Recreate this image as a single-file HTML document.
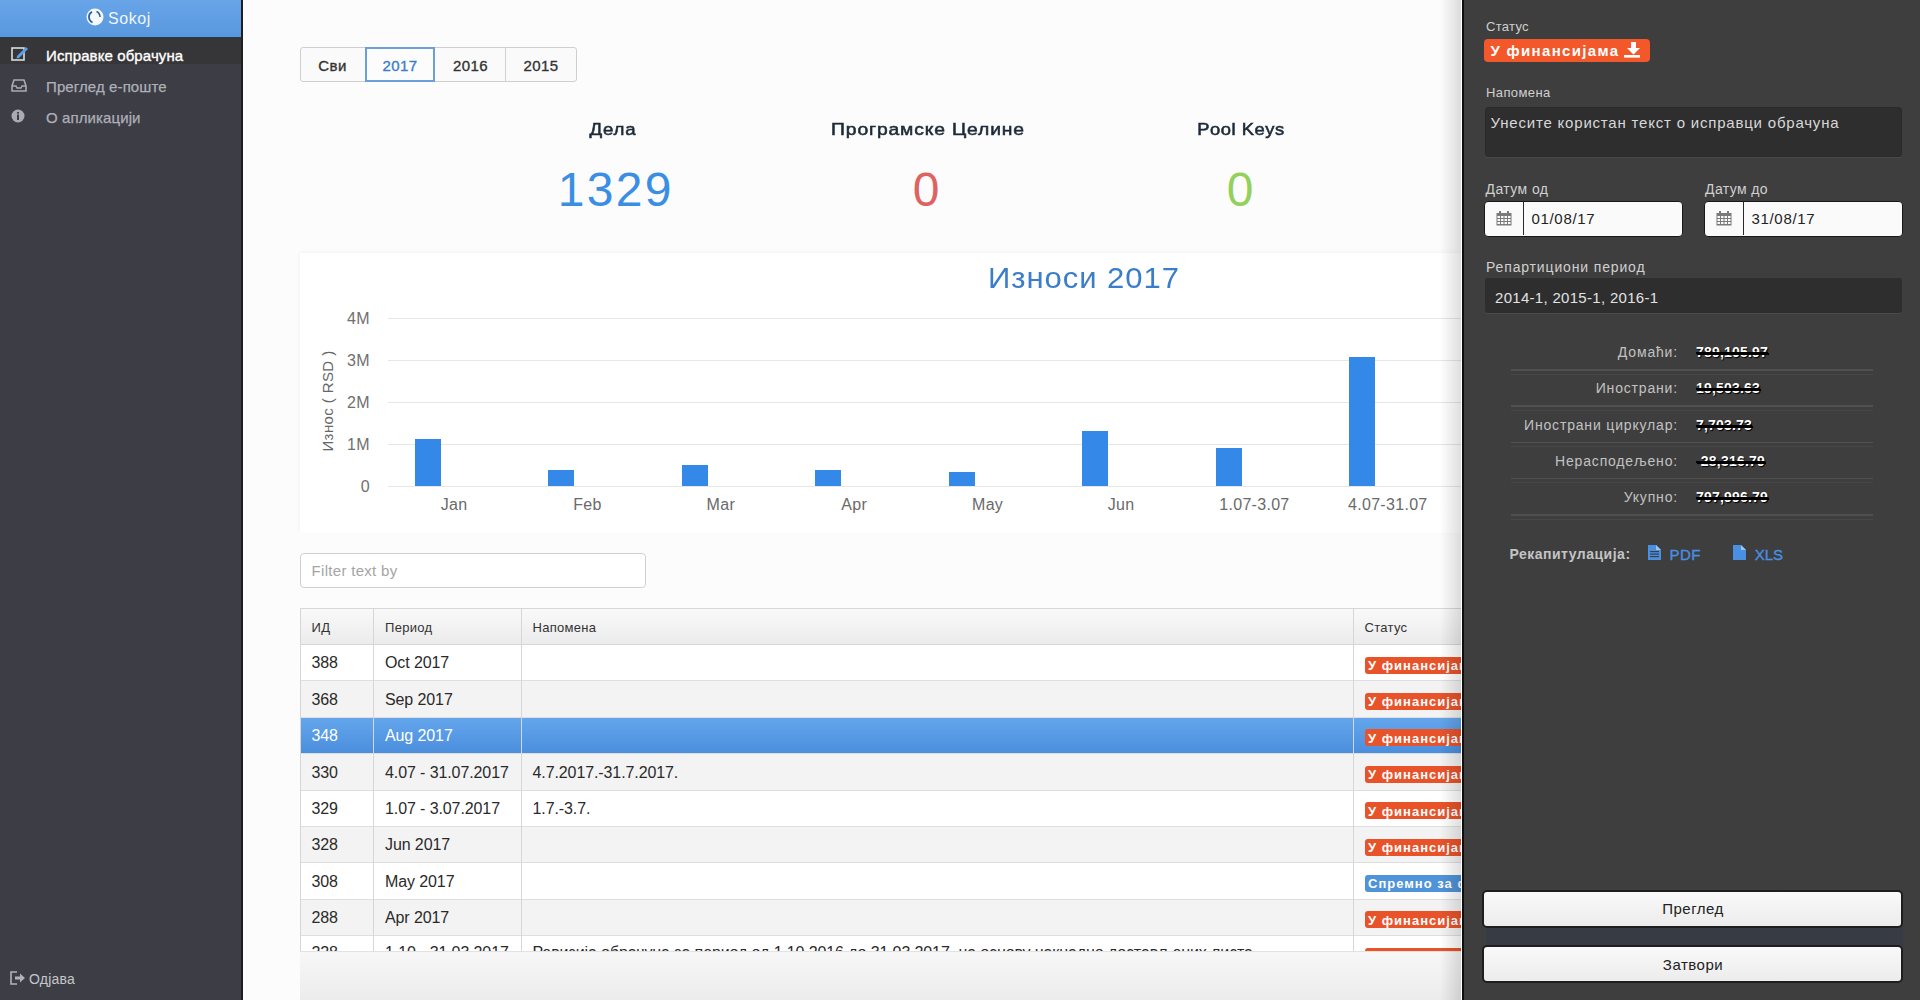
<!DOCTYPE html>
<html><head><meta charset="utf-8">
<style>
*{margin:0;padding:0}
html,body{width:1920px;height:1000px;overflow:hidden;background:#fcfcfc;position:relative;font-family:"Liberation Sans", sans-serif}
.r{position:absolute}
.t{position:absolute;white-space:nowrap;line-height:1}
</style></head><body>
<div class="r" style="left:243.0px;top:0.0px;width:1219.0px;height:1000.0px;background:#fcfcfc"></div>
<div class="r" style="left:300.0px;top:952.0px;width:1162.0px;height:48.0px;background:linear-gradient(#f7f7f7,#ececec)"></div>
<div class="r" style="left:0.0px;top:0.0px;width:241.0px;height:1000.0px;background:#3d3d45"></div>
<div class="r" style="left:241.0px;top:0.0px;width:2.0px;height:1000.0px;background:#1f1f22"></div>
<div class="r" style="left:0.0px;top:0.0px;width:241.0px;height:37.0px;background:linear-gradient(#67a4e8,#5a98de)"></div>
<div class="r" style="left:0.0px;top:34.0px;width:241.0px;height:3.0px;background:#5499e4"></div>
<div class="r" style="left:0.0px;top:37.0px;width:241.0px;height:27.0px;background:#363638"></div>
<svg class="r" style="left:86px;top:8px" width="18" height="18" viewBox="0 0 18 18"><circle cx="9" cy="9" r="8.5" fill="#f4f9ff"/><path d="M6 3.8 A6 6 0 0 0 6.5 14.5" fill="none" stroke="#2f5f99" stroke-width="1.7"/><path d="M10.5 3.5 A6 6 0 0 1 14 9" fill="none" stroke="#2f5f99" stroke-width="1.5"/></svg>
<div class="t" style="left:108.0px;top:10.7px;font-size:16px;color:#eef6ff;font-weight:normal;letter-spacing:0.6px;">Sokoj</div>
<svg class="r" style="left:11px;top:46px" width="18" height="16" viewBox="0 0 18 16"><rect x="1" y="2" width="12" height="12" fill="none" stroke="#ddd" stroke-width="1.6"/><path d="M6 10 L15 1 L17 3 L8 12 L5.5 12.5 Z" fill="#5a9ee8"/></svg>
<div class="t" style="left:46.0px;top:47.5px;font-size:15px;color:#ffffff;font-weight:normal;letter-spacing:0.1px;-webkit-text-stroke:0.35px currentColor;">Исправке обрачуна</div>
<svg class="r" style="left:11px;top:79px" width="16" height="13" viewBox="0 0 16 13"><path d="M3 1 H13 L15 7 V12 H1 V7 Z" fill="none" stroke="#a9abb3" stroke-width="1.6"/><path d="M1 7 H5 L6 9 H10 L11 7 H15" fill="none" stroke="#a9abb3" stroke-width="1.4"/></svg>
<div class="t" style="left:46.0px;top:78.5px;font-size:15px;color:#aeb0b8;font-weight:normal;letter-spacing:0.1px;-webkit-text-stroke:0.25px currentColor;">Преглед е-поште</div>
<svg class="r" style="left:11px;top:109px" width="14" height="14" viewBox="0 0 14 14"><circle cx="7" cy="7" r="6.5" fill="#a9abb3"/><rect x="6" y="5.5" width="2" height="5.5" fill="#3d3d45"/><rect x="6" y="3" width="2" height="1.6" fill="#3d3d45"/></svg>
<div class="t" style="left:46.0px;top:109.5px;font-size:15px;color:#aeb0b8;font-weight:normal;letter-spacing:0.1px;-webkit-text-stroke:0.25px currentColor;">О апликацији</div>
<svg class="r" style="left:10px;top:971px" width="16" height="14" viewBox="0 0 16 14"><path d="M7 1 H1 V13 H7" fill="none" stroke="#b0b2ba" stroke-width="1.6"/><path d="M5 5.5 H10 V2.5 L15 7 L10 11.5 V8.5 H5 Z" fill="#b0b2ba"/></svg>
<div class="t" style="left:29.0px;top:972.4px;font-size:14px;color:#c4c6cc;font-weight:normal;letter-spacing:0.2px;">Одјава</div>
<div class="r" style="left:300.0px;top:47.0px;width:277.0px;height:35.0px;background:#fafafa;border:1px solid #cfcfcf;border-radius:3px;box-sizing:border-box"></div>
<div class="r" style="left:505.0px;top:48.0px;width:1.0px;height:33.0px;background:#d2d2d2"></div>
<div class="r" style="left:365.0px;top:47.0px;width:70.0px;height:35.0px;border:2px solid #6a9fd8;box-sizing:border-box;background:#fcfcfc"></div>
<div class="t" style="left:302.5px;width:60px;text-align:center;top:57.9px;font-size:15px;color:#333;font-weight:normal;letter-spacing:0.4px;-webkit-text-stroke:0.35px currentColor;">Сви</div>
<div class="t" style="left:370.0px;width:60px;text-align:center;top:57.9px;font-size:15px;color:#3b7dc9;font-weight:normal;letter-spacing:0.4px;-webkit-text-stroke:0.35px currentColor;">2017</div>
<div class="t" style="left:440.5px;width:60px;text-align:center;top:57.9px;font-size:15px;color:#333;font-weight:normal;letter-spacing:0.4px;-webkit-text-stroke:0.35px currentColor;">2016</div>
<div class="t" style="left:511.0px;width:60px;text-align:center;top:57.9px;font-size:15px;color:#333;font-weight:normal;letter-spacing:0.4px;-webkit-text-stroke:0.35px currentColor;">2015</div>
<div class="t" style="left:463.0px;width:300px;text-align:center;top:121.2px;font-size:17px;color:#1d2a38;font-weight:normal;letter-spacing:0.7px;-webkit-text-stroke:0.55px currentColor;transform:scaleX(1.1)">Дела</div>
<div class="t" style="left:777.5px;width:300px;text-align:center;top:121.2px;font-size:17px;color:#1d2a38;font-weight:normal;letter-spacing:0.75px;-webkit-text-stroke:0.55px currentColor;transform:scaleX(1.135)">Програмске Целине</div>
<div class="t" style="left:1091.0px;width:300px;text-align:center;top:121.2px;font-size:17px;color:#1d2a38;font-weight:normal;letter-spacing:0.5px;-webkit-text-stroke:0.55px currentColor;transform:scaleX(1.08)">Pool Keys</div>
<div class="t" style="left:465.8px;width:300px;text-align:center;top:166.4px;font-size:48px;color:#3a8ee3;font-weight:normal;letter-spacing:2.3px;">1329</div>
<div class="t" style="left:776.0px;width:300px;text-align:center;top:166.4px;font-size:48px;color:#df6262;font-weight:normal;letter-spacing:0px;">0</div>
<div class="t" style="left:1090.0px;width:300px;text-align:center;top:166.4px;font-size:48px;color:#94d15a;font-weight:normal;letter-spacing:0px;">0</div>
<div class="r" style="left:300.0px;top:253.0px;width:1170.0px;height:280.0px;background:#fff;box-shadow:0 -2px 3px rgba(0,0,0,0.025), -2px 0 3px rgba(0,0,0,0.02)"></div>
<div class="t" style="left:883.5px;width:400px;text-align:center;top:262.8px;font-size:30px;color:#3a7dc8;font-weight:normal;letter-spacing:0.9px;transform:scaleX(1.035)">Износи 2017</div>
<div class="r" style="left:388.0px;top:317.5px;width:1080.0px;height:1.5px;background:#e6e6e6"></div>
<div class="t" style="left:310.0px;width:60px;text-align:right;top:310.7px;font-size:16px;color:#707070;font-weight:normal;letter-spacing:0.4px;">4M</div>
<div class="r" style="left:388.0px;top:359.5px;width:1080.0px;height:1.5px;background:#e6e6e6"></div>
<div class="t" style="left:310.0px;width:60px;text-align:right;top:352.7px;font-size:16px;color:#707070;font-weight:normal;letter-spacing:0.4px;">3M</div>
<div class="r" style="left:388.0px;top:401.5px;width:1080.0px;height:1.5px;background:#e6e6e6"></div>
<div class="t" style="left:310.0px;width:60px;text-align:right;top:394.7px;font-size:16px;color:#707070;font-weight:normal;letter-spacing:0.4px;">2M</div>
<div class="r" style="left:388.0px;top:443.5px;width:1080.0px;height:1.5px;background:#e6e6e6"></div>
<div class="t" style="left:310.0px;width:60px;text-align:right;top:436.7px;font-size:16px;color:#707070;font-weight:normal;letter-spacing:0.4px;">1M</div>
<div class="r" style="left:388.0px;top:485.5px;width:1080.0px;height:1.5px;background:#e6e6e6"></div>
<div class="t" style="left:310.0px;width:60px;text-align:right;top:478.7px;font-size:16px;color:#707070;font-weight:normal;letter-spacing:0.4px;">0</div>
<div class="t" style="left:268px;top:392px;width:120px;text-align:center;font-size:15px;color:#666;transform:rotate(-90deg);letter-spacing:0.4px;line-height:18px">Износ ( RSD )</div>
<div class="r" style="left:415.0px;top:439.0px;width:26.0px;height:47.0px;background:#3388e8"></div>
<div class="r" style="left:548.0px;top:470.0px;width:26.0px;height:16.0px;background:#3388e8"></div>
<div class="r" style="left:682.0px;top:465.0px;width:26.0px;height:21.0px;background:#3388e8"></div>
<div class="r" style="left:815.0px;top:470.0px;width:26.0px;height:16.0px;background:#3388e8"></div>
<div class="r" style="left:949.0px;top:472.0px;width:26.0px;height:14.0px;background:#3388e8"></div>
<div class="r" style="left:1082.0px;top:431.0px;width:26.0px;height:55.0px;background:#3388e8"></div>
<div class="r" style="left:1216.0px;top:448.0px;width:26.0px;height:38.0px;background:#3388e8"></div>
<div class="r" style="left:1349.0px;top:357.0px;width:26.0px;height:129.0px;background:#3388e8"></div>
<div class="t" style="left:384.0px;width:140px;text-align:center;top:497.3px;font-size:16px;color:#6a6a6a;font-weight:normal;letter-spacing:0.3px;">Jan</div>
<div class="t" style="left:517.4px;width:140px;text-align:center;top:497.3px;font-size:16px;color:#6a6a6a;font-weight:normal;letter-spacing:0.3px;">Feb</div>
<div class="t" style="left:650.8px;width:140px;text-align:center;top:497.3px;font-size:16px;color:#6a6a6a;font-weight:normal;letter-spacing:0.3px;">Mar</div>
<div class="t" style="left:784.2px;width:140px;text-align:center;top:497.3px;font-size:16px;color:#6a6a6a;font-weight:normal;letter-spacing:0.3px;">Apr</div>
<div class="t" style="left:917.6px;width:140px;text-align:center;top:497.3px;font-size:16px;color:#6a6a6a;font-weight:normal;letter-spacing:0.3px;">May</div>
<div class="t" style="left:1051.0px;width:140px;text-align:center;top:497.3px;font-size:16px;color:#6a6a6a;font-weight:normal;letter-spacing:0.3px;">Jun</div>
<div class="t" style="left:1184.4px;width:140px;text-align:center;top:497.3px;font-size:16px;color:#6a6a6a;font-weight:normal;letter-spacing:0.3px;">1.07-3.07</div>
<div class="t" style="left:1317.8px;width:140px;text-align:center;top:497.3px;font-size:16px;color:#6a6a6a;font-weight:normal;letter-spacing:0.3px;">4.07-31.07</div>
<div class="r" style="left:300.0px;top:553.0px;width:346.0px;height:35.0px;background:#fff;border:1px solid #d0d0d0;border-radius:4px;box-sizing:border-box"></div>
<div class="t" style="left:311.6px;top:563.0px;font-size:15px;color:#a5a5a5;font-weight:normal;letter-spacing:0.3px;">Filter text by</div>
<div class="r" style="left:0;top:0;width:1462px;height:952px;overflow:hidden">
<div class="r" style="left:300.0px;top:608.0px;width:1170.0px;height:37.0px;background:linear-gradient(#f9f9f9,#ebebeb);border-top:1px solid #d6d6d6;box-sizing:border-box"></div>
<div class="r" style="left:300.0px;top:644.0px;width:1170.0px;height:1.0px;background:#d6d6d6"></div>
<div class="r" style="left:300.0px;top:645.0px;width:1170.0px;height:36.4px;background:#ffffff"></div>
<div class="r" style="left:300.0px;top:680.4px;width:1170.0px;height:1.0px;background:#dedede"></div>
<div class="t" style="left:311.5px;top:655.3px;font-size:16px;color:#2a2a2a;font-weight:normal;letter-spacing:-0.1px;">388</div>
<div class="t" style="left:385.0px;top:655.3px;font-size:16px;color:#2a2a2a;font-weight:normal;letter-spacing:-0.1px;">Oct 2017</div>
<div class="r" style="left:1364.5px;top:656.5px;width:110.0px;height:17.0px;background:#e8532a;border-radius:3px"></div>
<div class="t" style="left:1368.0px;top:659.0px;font-size:13px;color:#fff;font-weight:bold;letter-spacing:1.0px;">У финансијама</div>
<div class="r" style="left:300.0px;top:681.4px;width:1170.0px;height:36.4px;background:#f3f3f3"></div>
<div class="r" style="left:300.0px;top:716.8px;width:1170.0px;height:1.0px;background:#dedede"></div>
<div class="t" style="left:311.5px;top:691.7px;font-size:16px;color:#2a2a2a;font-weight:normal;letter-spacing:-0.1px;">368</div>
<div class="t" style="left:385.0px;top:691.7px;font-size:16px;color:#2a2a2a;font-weight:normal;letter-spacing:-0.1px;">Sep 2017</div>
<div class="r" style="left:1364.5px;top:692.9px;width:110.0px;height:17.0px;background:#e8532a;border-radius:3px"></div>
<div class="t" style="left:1368.0px;top:695.4px;font-size:13px;color:#fff;font-weight:bold;letter-spacing:1.0px;">У финансијама</div>
<div class="r" style="left:300.0px;top:717.8px;width:1170.0px;height:36.4px;background:linear-gradient(#64a6ec,#4a8ddc)"></div>
<div class="r" style="left:300.0px;top:753.2px;width:1170.0px;height:1.0px;background:#dedede"></div>
<div class="t" style="left:311.5px;top:728.1px;font-size:16px;color:#fff;font-weight:normal;letter-spacing:-0.1px;">348</div>
<div class="t" style="left:385.0px;top:728.1px;font-size:16px;color:#fff;font-weight:normal;letter-spacing:-0.1px;">Aug 2017</div>
<div class="r" style="left:1364.5px;top:729.3px;width:110.0px;height:17.0px;background:#e8532a;border-radius:3px"></div>
<div class="t" style="left:1368.0px;top:731.8px;font-size:13px;color:#fff;font-weight:bold;letter-spacing:1.0px;">У финансијама</div>
<div class="r" style="left:300.0px;top:754.2px;width:1170.0px;height:36.4px;background:#f3f3f3"></div>
<div class="r" style="left:300.0px;top:789.6px;width:1170.0px;height:1.0px;background:#dedede"></div>
<div class="t" style="left:311.5px;top:764.5px;font-size:16px;color:#2a2a2a;font-weight:normal;letter-spacing:-0.1px;">330</div>
<div class="t" style="left:385.0px;top:764.5px;font-size:16px;color:#2a2a2a;font-weight:normal;letter-spacing:-0.1px;">4.07 - 31.07.2017</div>
<div class="t" style="left:532.5px;top:764.5px;font-size:16px;color:#2a2a2a;font-weight:normal;letter-spacing:-0.1px;">4.7.2017.-31.7.2017.</div>
<div class="r" style="left:1364.5px;top:765.7px;width:110.0px;height:17.0px;background:#e8532a;border-radius:3px"></div>
<div class="t" style="left:1368.0px;top:768.2px;font-size:13px;color:#fff;font-weight:bold;letter-spacing:1.0px;">У финансијама</div>
<div class="r" style="left:300.0px;top:790.6px;width:1170.0px;height:36.4px;background:#ffffff"></div>
<div class="r" style="left:300.0px;top:826.0px;width:1170.0px;height:1.0px;background:#dedede"></div>
<div class="t" style="left:311.5px;top:800.9px;font-size:16px;color:#2a2a2a;font-weight:normal;letter-spacing:-0.1px;">329</div>
<div class="t" style="left:385.0px;top:800.9px;font-size:16px;color:#2a2a2a;font-weight:normal;letter-spacing:-0.1px;">1.07 - 3.07.2017</div>
<div class="t" style="left:532.5px;top:800.9px;font-size:16px;color:#2a2a2a;font-weight:normal;letter-spacing:-0.1px;">1.7.-3.7.</div>
<div class="r" style="left:1364.5px;top:802.1px;width:110.0px;height:17.0px;background:#e8532a;border-radius:3px"></div>
<div class="t" style="left:1368.0px;top:804.6px;font-size:13px;color:#fff;font-weight:bold;letter-spacing:1.0px;">У финансијама</div>
<div class="r" style="left:300.0px;top:827.0px;width:1170.0px;height:36.4px;background:#f3f3f3"></div>
<div class="r" style="left:300.0px;top:862.4px;width:1170.0px;height:1.0px;background:#dedede"></div>
<div class="t" style="left:311.5px;top:837.3px;font-size:16px;color:#2a2a2a;font-weight:normal;letter-spacing:-0.1px;">328</div>
<div class="t" style="left:385.0px;top:837.3px;font-size:16px;color:#2a2a2a;font-weight:normal;letter-spacing:-0.1px;">Jun 2017</div>
<div class="r" style="left:1364.5px;top:838.5px;width:110.0px;height:17.0px;background:#e8532a;border-radius:3px"></div>
<div class="t" style="left:1368.0px;top:841.0px;font-size:13px;color:#fff;font-weight:bold;letter-spacing:1.0px;">У финансијама</div>
<div class="r" style="left:300.0px;top:863.4px;width:1170.0px;height:36.4px;background:#ffffff"></div>
<div class="r" style="left:300.0px;top:898.8px;width:1170.0px;height:1.0px;background:#dedede"></div>
<div class="t" style="left:311.5px;top:873.7px;font-size:16px;color:#2a2a2a;font-weight:normal;letter-spacing:-0.1px;">308</div>
<div class="t" style="left:385.0px;top:873.7px;font-size:16px;color:#2a2a2a;font-weight:normal;letter-spacing:-0.1px;">May 2017</div>
<div class="r" style="left:1364.5px;top:874.9px;width:110.0px;height:17.0px;background:#4f93d8;border-radius:3px"></div>
<div class="t" style="left:1368.0px;top:877.4px;font-size:13px;color:#fff;font-weight:bold;letter-spacing:1.0px;">Спремно за финансије</div>
<div class="r" style="left:300.0px;top:899.8px;width:1170.0px;height:36.4px;background:#f3f3f3"></div>
<div class="r" style="left:300.0px;top:935.2px;width:1170.0px;height:1.0px;background:#dedede"></div>
<div class="t" style="left:311.5px;top:910.1px;font-size:16px;color:#2a2a2a;font-weight:normal;letter-spacing:-0.1px;">288</div>
<div class="t" style="left:385.0px;top:910.1px;font-size:16px;color:#2a2a2a;font-weight:normal;letter-spacing:-0.1px;">Apr 2017</div>
<div class="r" style="left:1364.5px;top:911.3px;width:110.0px;height:17.0px;background:#e8532a;border-radius:3px"></div>
<div class="t" style="left:1368.0px;top:913.8px;font-size:13px;color:#fff;font-weight:bold;letter-spacing:1.0px;">У финансијама</div>
<div class="r" style="left:300.0px;top:936.2px;width:1170.0px;height:15.8px;background:#ffffff"></div>
<div class="t" style="left:311.5px;top:945.3px;font-size:16px;color:#2a2a2a;font-weight:normal;letter-spacing:-0.1px;">228</div>
<div class="t" style="left:385.0px;top:945.3px;font-size:16px;color:#2a2a2a;font-weight:normal;letter-spacing:-0.1px;">1.10 - 31.03.2017</div>
<div class="t" style="left:532.5px;top:945.3px;font-size:16px;color:#2a2a2a;font-weight:normal;letter-spacing:-0.1px;">Ревизија обрачуна за период од 1.10.2016 до 31.03.2017, на основу накнадно достављених листа</div>
<div class="r" style="left:1364.5px;top:947.7px;width:110.0px;height:17.0px;background:#e8532a;border-radius:3px"></div>
<div class="t" style="left:311.5px;top:620.7px;font-size:13px;color:#333;font-weight:normal;letter-spacing:0.3px;">ИД</div>
<div class="t" style="left:385.0px;top:620.7px;font-size:13px;color:#333;font-weight:normal;letter-spacing:0.3px;">Период</div>
<div class="t" style="left:532.5px;top:620.7px;font-size:13px;color:#333;font-weight:normal;letter-spacing:0.3px;">Напомена</div>
<div class="t" style="left:1364.5px;top:620.7px;font-size:13px;color:#333;font-weight:normal;letter-spacing:0.3px;">Статус</div>
<div class="r" style="left:300.0px;top:608.0px;width:1.0px;height:344.0px;background:#d6d6d6"></div>
<div class="r" style="left:373.0px;top:608.0px;width:1.0px;height:344.0px;background:#d6d6d6"></div>
<div class="r" style="left:521.0px;top:608.0px;width:1.0px;height:344.0px;background:#d6d6d6"></div>
<div class="r" style="left:1353.0px;top:608.0px;width:1.0px;height:344.0px;background:#d6d6d6"></div>
</div>
<div class="r" style="left:300.0px;top:951.0px;width:1162.0px;height:1.0px;background:#e2e2e2"></div>
<div class="r" style="left:1440.0px;top:0.0px;width:21.0px;height:1000.0px;background:linear-gradient(90deg,rgba(0,0,0,0),rgba(0,0,0,0.13))"></div>
<div class="r" style="left:1461.0px;top:0.0px;width:1.0px;height:1000.0px;background:#fff"></div>
<div class="r" style="left:1462.0px;top:0.0px;width:458.0px;height:1000.0px;background:#3e3e3e"></div>
<div class="r" style="left:1462.0px;top:0.0px;width:2.0px;height:1000.0px;background:#0e0e0e"></div>
<div class="t" style="left:1486.0px;top:20.2px;font-size:13px;color:#d0d0d0;font-weight:normal;letter-spacing:0.3px;">Статус</div>
<div class="r" style="left:1484.0px;top:39.0px;width:166.0px;height:23.4px;background:#f2582a;border-radius:4px"></div>
<div class="t" style="left:1490.4px;top:43.1px;font-size:15px;color:#fff;font-weight:bold;letter-spacing:1.34px;">У финансијама</div>
<svg class="r" style="left:1624px;top:42px" width="19" height="17" viewBox="0 0 19 17"><path d="M7 0 H12 V6 H16 L9.5 12.5 L3 6 H7 Z" fill="#fff"/><rect x="0" y="13" width="16" height="2.6" fill="#fff"/></svg>
<div class="t" style="left:1486.0px;top:86.0px;font-size:13px;color:#d0d0d0;font-weight:normal;letter-spacing:0.4px;">Напомена</div>
<div class="r" style="left:1485.0px;top:106.5px;width:417.0px;height:50.5px;background:#2e2e2e;border:1px solid #2a2a2a;border-radius:3px;box-sizing:border-box;box-shadow:0 1px 0 #4a4a4a"></div>
<div class="t" style="left:1490.6px;top:115.3px;font-size:15px;color:#d8d8d8;font-weight:normal;letter-spacing:0.8px;">Унесите користан текст о исправци обрачуна</div>
<div class="t" style="left:1485.6px;top:182.0px;font-size:14px;color:#d0d0d0;font-weight:normal;letter-spacing:0.4px;">Датум од</div>
<div class="t" style="left:1705.0px;top:182.0px;font-size:14px;color:#d0d0d0;font-weight:normal;letter-spacing:0.4px;">Датум до</div>
<div class="r" style="left:1484.0px;top:201.3px;width:199.0px;height:35.5px;background:#fafafa;border:1px solid #181818;border-radius:4px;box-sizing:border-box"></div>
<div class="r" style="left:1523.0px;top:202.3px;width:1.0px;height:33.0px;background:#2a2a2a"></div>
<svg class="r" style="left:1496px;top:211px" width="16" height="15" viewBox="0 0 16 15"><rect x="0.5" y="2" width="15" height="12.5" fill="#7a7a7a"/><rect x="3" y="0" width="2" height="3" fill="#7a7a7a"/><rect x="11" y="0" width="2" height="3" fill="#7a7a7a"/><rect x="1.5" y="5" width="2.5" height="2" fill="#fafafa"/><rect x="1.5" y="8" width="2.5" height="2" fill="#fafafa"/><rect x="1.5" y="11" width="2.5" height="2" fill="#fafafa"/><rect x="5.0" y="5" width="2.5" height="2" fill="#fafafa"/><rect x="5.0" y="8" width="2.5" height="2" fill="#fafafa"/><rect x="5.0" y="11" width="2.5" height="2" fill="#fafafa"/><rect x="8.5" y="5" width="2.5" height="2" fill="#fafafa"/><rect x="8.5" y="8" width="2.5" height="2" fill="#fafafa"/><rect x="8.5" y="11" width="2.5" height="2" fill="#fafafa"/><rect x="12.0" y="5" width="2.5" height="2" fill="#fafafa"/><rect x="12.0" y="8" width="2.5" height="2" fill="#fafafa"/><rect x="12.0" y="11" width="2.5" height="2" fill="#fafafa"/></svg>
<div class="t" style="left:1531.4px;top:211.4px;font-size:15px;color:#222;font-weight:normal;letter-spacing:0.7px;">01/08/17</div>
<div class="r" style="left:1704.0px;top:201.3px;width:199.0px;height:35.5px;background:#fafafa;border:1px solid #181818;border-radius:4px;box-sizing:border-box"></div>
<div class="r" style="left:1743.0px;top:202.3px;width:1.0px;height:33.0px;background:#2a2a2a"></div>
<svg class="r" style="left:1716px;top:211px" width="16" height="15" viewBox="0 0 16 15"><rect x="0.5" y="2" width="15" height="12.5" fill="#7a7a7a"/><rect x="3" y="0" width="2" height="3" fill="#7a7a7a"/><rect x="11" y="0" width="2" height="3" fill="#7a7a7a"/><rect x="1.5" y="5" width="2.5" height="2" fill="#fafafa"/><rect x="1.5" y="8" width="2.5" height="2" fill="#fafafa"/><rect x="1.5" y="11" width="2.5" height="2" fill="#fafafa"/><rect x="5.0" y="5" width="2.5" height="2" fill="#fafafa"/><rect x="5.0" y="8" width="2.5" height="2" fill="#fafafa"/><rect x="5.0" y="11" width="2.5" height="2" fill="#fafafa"/><rect x="8.5" y="5" width="2.5" height="2" fill="#fafafa"/><rect x="8.5" y="8" width="2.5" height="2" fill="#fafafa"/><rect x="8.5" y="11" width="2.5" height="2" fill="#fafafa"/><rect x="12.0" y="5" width="2.5" height="2" fill="#fafafa"/><rect x="12.0" y="8" width="2.5" height="2" fill="#fafafa"/><rect x="12.0" y="11" width="2.5" height="2" fill="#fafafa"/></svg>
<div class="t" style="left:1751.4px;top:211.4px;font-size:15px;color:#222;font-weight:normal;letter-spacing:0.7px;">31/08/17</div>
<div class="t" style="left:1486.0px;top:260.2px;font-size:14px;color:#d0d0d0;font-weight:normal;letter-spacing:0.85px;">Репартициони период</div>
<div class="r" style="left:1485.0px;top:277.5px;width:417.0px;height:35.0px;background:#2e2e2e;border-radius:3px;box-shadow:0 1px 0 #4a4a4a"></div>
<div class="t" style="left:1495.0px;top:289.8px;font-size:15px;color:#e2e2e2;font-weight:normal;letter-spacing:0.3px;">2014-1, 2015-1, 2016-1</div>
<div class="t" style="left:1478.0px;width:200px;text-align:right;top:344.9px;font-size:14px;color:#c2c2c2;font-weight:normal;letter-spacing:0.83px;">Домаћи:</div>
<div class="t" style="left:1696.0px;top:344.9px;font-size:14px;color:#fff;font-weight:bold;letter-spacing:0.2px;text-decoration:line-through;text-decoration-color:#000;text-decoration-thickness:1.5px;text-shadow:1px 1px 1px #000">789,105.97</div>
<div class="r" style="left:1511.0px;top:369.0px;width:362.0px;height:1.5px;background:#505050"></div>
<div class="r" style="left:1511.0px;top:373.5px;width:362.0px;height:1.0px;background:#474747"></div>
<div class="t" style="left:1478.0px;width:200px;text-align:right;top:381.2px;font-size:14px;color:#c2c2c2;font-weight:normal;letter-spacing:0.83px;">Инострани:</div>
<div class="t" style="left:1696.0px;top:381.2px;font-size:14px;color:#fff;font-weight:bold;letter-spacing:0.2px;text-decoration:line-through;text-decoration-color:#000;text-decoration-thickness:1.5px;text-shadow:1px 1px 1px #000">19,503.63</div>
<div class="r" style="left:1511.0px;top:405.3px;width:362.0px;height:1.5px;background:#505050"></div>
<div class="r" style="left:1511.0px;top:409.8px;width:362.0px;height:1.0px;background:#474747"></div>
<div class="t" style="left:1478.0px;width:200px;text-align:right;top:417.5px;font-size:14px;color:#c2c2c2;font-weight:normal;letter-spacing:0.83px;">Инострани циркулар:</div>
<div class="t" style="left:1696.0px;top:417.5px;font-size:14px;color:#fff;font-weight:bold;letter-spacing:0.2px;text-decoration:line-through;text-decoration-color:#000;text-decoration-thickness:1.5px;text-shadow:1px 1px 1px #000">7,703.73</div>
<div class="r" style="left:1511.0px;top:441.6px;width:362.0px;height:1.5px;background:#505050"></div>
<div class="r" style="left:1511.0px;top:446.1px;width:362.0px;height:1.0px;background:#474747"></div>
<div class="t" style="left:1478.0px;width:200px;text-align:right;top:453.8px;font-size:14px;color:#c2c2c2;font-weight:normal;letter-spacing:0.83px;">Нерасподељено:</div>
<div class="t" style="left:1696.0px;top:453.8px;font-size:14px;color:#fff;font-weight:bold;letter-spacing:0.2px;text-decoration:line-through;text-decoration-color:#000;text-decoration-thickness:1.5px;text-shadow:1px 1px 1px #000">-28,316.79</div>
<div class="r" style="left:1511.0px;top:477.9px;width:362.0px;height:1.5px;background:#505050"></div>
<div class="r" style="left:1511.0px;top:482.4px;width:362.0px;height:1.0px;background:#474747"></div>
<div class="t" style="left:1478.0px;width:200px;text-align:right;top:490.1px;font-size:14px;color:#c2c2c2;font-weight:normal;letter-spacing:0.83px;">Укупно:</div>
<div class="t" style="left:1696.0px;top:490.1px;font-size:14px;color:#fff;font-weight:bold;letter-spacing:0.2px;text-decoration:line-through;text-decoration-color:#000;text-decoration-thickness:1.5px;text-shadow:1px 1px 1px #000">797,996.79</div>
<div class="r" style="left:1511.0px;top:514.2px;width:362.0px;height:1.5px;background:#505050"></div>
<div class="r" style="left:1511.0px;top:518.7px;width:362.0px;height:1.0px;background:#474747"></div>
<div class="t" style="left:1509.4px;top:547.4px;font-size:14px;color:#c4c4c4;font-weight:bold;letter-spacing:0.5px;">Рекапитулација:</div>
<svg class="r" style="left:1648px;top:545px" width="13" height="15" viewBox="0 0 13 15"><path d="M0 0 H8 L13 5 V15 H0 Z" fill="#4a90e2"/><path d="M8 0 V5 H13" fill="#9cc4f0"/><rect x="2" y="6" width="9" height="1.2" fill="#3e3e3e"/><rect x="2" y="8.5" width="9" height="1.2" fill="#3e3e3e"/><rect x="2" y="11" width="9" height="1.2" fill="#3e3e3e"/></svg>
<div class="t" style="left:1669.5px;top:546.5px;font-size:15px;color:#4a90e2;font-weight:normal;letter-spacing:0.5px;-webkit-text-stroke:0.35px currentColor;">PDF</div>
<svg class="r" style="left:1733px;top:545px" width="13" height="15" viewBox="0 0 13 15"><path d="M0 0 H8 L13 5 V15 H0 Z" fill="#4a90e2"/><path d="M8 0 V5 H13" fill="#9cc4f0"/></svg>
<div class="t" style="left:1754.7px;top:546.5px;font-size:15px;color:#4a90e2;font-weight:normal;letter-spacing:0px;-webkit-text-stroke:0.35px currentColor;">XLS</div>
<div class="r" style="left:1486.0px;top:926.0px;width:417.0px;height:20.0px;background:#373c44"></div>
<div class="r" style="left:1482.0px;top:890.0px;width:421.0px;height:38.0px;background:linear-gradient(#f9f9f9,#ececec);border:2px solid #1e1e1e;border-radius:5px;box-sizing:border-box"></div>
<div class="t" style="left:1593.0px;width:200px;text-align:center;top:901.2px;font-size:15px;color:#222;font-weight:normal;letter-spacing:0.5px;">Преглед</div>
<div class="r" style="left:1482.0px;top:944.5px;width:421.0px;height:38.0px;background:linear-gradient(#f9f9f9,#ececec);border:2px solid #1e1e1e;border-radius:5px;box-sizing:border-box"></div>
<div class="t" style="left:1593.0px;width:200px;text-align:center;top:957.0px;font-size:15px;color:#222;font-weight:normal;letter-spacing:0.5px;">Затвори</div>
</body></html>
